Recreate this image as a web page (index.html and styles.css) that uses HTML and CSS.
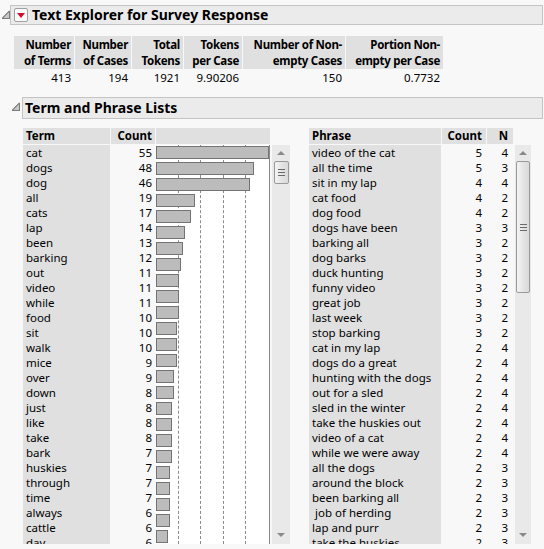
FILE: index.html
```html
<!DOCTYPE html>
<html>
<head>
<meta charset="utf-8">
<link rel="stylesheet" href="styles.css">
</head>
<body>
<div class="report">
  <div class="outline outline-top">
    <span class="disclosure"></span>
    <div class="outline-bar">
      <span class="menu-btn"><span class="menu-arrow"></span></span>
      <span class="outline-title">Text Explorer for Survey Response</span>
    </div>
  </div>

  <table class="summary">
    <thead>
      <tr>
        <th class="c1">Number<br>of Terms</th>
        <th class="c2">Number<br>of Cases</th>
        <th class="c3">Total<br>Tokens</th>
        <th class="c4">Tokens<br>per Case</th>
        <th class="c5">Number of Non-<br>empty Cases</th>
        <th class="c6">Portion Non-<br>empty per Case</th>
      </tr>
    </thead>
    <tbody>
      <tr>
        <td>413</td><td>194</td><td>1921</td><td>9.90206</td><td>150</td><td>0.7732</td>
      </tr>
    </tbody>
  </table>

  <div class="outline outline-sub">
    <span class="disclosure"></span>
    <div class="outline-bar">
      <span class="outline-title">Term and Phrase Lists</span>
    </div>
  </div>

  <div class="lists">
    <div class="list term-list">
      <div class="list-head">
        <div class="h-term">Term</div>
        <div class="h-count">Count</div>
        <div class="h-chart"></div>
      </div>
      <div class="list-body">
        <div class="col col-term">
          <div>cat</div><div>dogs</div><div>dog</div><div>all</div><div>cats</div><div>lap</div><div>been</div><div>barking</div><div>out</div><div>video</div><div>while</div><div>food</div><div>sit</div><div>walk</div><div>mice</div><div>over</div><div>down</div><div>just</div><div>like</div><div>take</div><div>bark</div><div>huskies</div><div>through</div><div>time</div><div>always</div><div>cattle</div><div>day</div>
        </div>
        <div class="col col-count">
          <div>55</div><div>48</div><div>46</div><div>19</div><div>17</div><div>14</div><div>13</div><div>12</div><div>11</div><div>11</div><div>11</div><div>10</div><div>10</div><div>10</div><div>9</div><div>9</div><div>8</div><div>8</div><div>8</div><div>8</div><div>7</div><div>7</div><div>7</div><div>7</div><div>6</div><div>6</div><div>6</div>
        </div>
        <div class="col col-chart">
          <span class="grid g1"></span><span class="grid g2"></span><span class="grid g3"></span><span class="grid g4"></span>
          <div class="bar-row"><span class="bar" style="width:113px"></span></div>
          <div class="bar-row"><span class="bar" style="width:98px"></span></div>
          <div class="bar-row"><span class="bar" style="width:94px"></span></div>
          <div class="bar-row"><span class="bar" style="width:39px"></span></div>
          <div class="bar-row"><span class="bar" style="width:35px"></span></div>
          <div class="bar-row"><span class="bar" style="width:29px"></span></div>
          <div class="bar-row"><span class="bar" style="width:27px"></span></div>
          <div class="bar-row"><span class="bar" style="width:25px"></span></div>
          <div class="bar-row"><span class="bar" style="width:23px"></span></div>
          <div class="bar-row"><span class="bar" style="width:23px"></span></div>
          <div class="bar-row"><span class="bar" style="width:23px"></span></div>
          <div class="bar-row"><span class="bar" style="width:21px"></span></div>
          <div class="bar-row"><span class="bar" style="width:21px"></span></div>
          <div class="bar-row"><span class="bar" style="width:21px"></span></div>
          <div class="bar-row"><span class="bar" style="width:18px"></span></div>
          <div class="bar-row"><span class="bar" style="width:18px"></span></div>
          <div class="bar-row"><span class="bar" style="width:16px"></span></div>
          <div class="bar-row"><span class="bar" style="width:16px"></span></div>
          <div class="bar-row"><span class="bar" style="width:16px"></span></div>
          <div class="bar-row"><span class="bar" style="width:16px"></span></div>
          <div class="bar-row"><span class="bar" style="width:14px"></span></div>
          <div class="bar-row"><span class="bar" style="width:14px"></span></div>
          <div class="bar-row"><span class="bar" style="width:14px"></span></div>
          <div class="bar-row"><span class="bar" style="width:14px"></span></div>
          <div class="bar-row"><span class="bar" style="width:12px"></span></div>
          <div class="bar-row"><span class="bar" style="width:12px"></span></div>
          <div class="bar-row"><span class="bar" style="width:12px"></span></div>
        </div>
        <div class="scrollbar">
          <span class="sb-up"></span>
          <div class="sb-track">
            <span class="sb-thumb thumb-short"><span class="grip"></span></span>
          </div>
          <span class="sb-down"></span>
        </div>
      </div>
    </div>

    <div class="list phrase-list">
      <div class="list-head">
        <div class="h-phrase">Phrase</div>
        <div class="h-pcount">Count</div>
        <div class="h-n">N</div>
      </div>
      <div class="list-body">
        <div class="col col-phrase">
          <div>video of the cat</div><div>all the time</div><div>sit in my lap</div><div>cat food</div><div>dog food</div><div>dogs have been</div><div>barking all</div><div>dog barks</div><div>duck hunting</div><div>funny video</div><div>great job</div><div>last week</div><div>stop barking</div><div>cat in my lap</div><div>dogs do a great</div><div>hunting with the dogs</div><div>out for a sled</div><div>sled in the winter</div><div>take the huskies out</div><div>video of a cat</div><div>while we were away</div><div>all the dogs</div><div>around the block</div><div>been barking all</div><div>&nbsp;job of herding</div><div>lap and purr</div><div>take the huskies</div>
        </div>
        <div class="col col-pcount">
          <div>5</div><div>5</div><div>4</div><div>4</div><div>4</div><div>3</div><div>3</div><div>3</div><div>3</div><div>3</div><div>3</div><div>3</div><div>3</div><div>2</div><div>2</div><div>2</div><div>2</div><div>2</div><div>2</div><div>2</div><div>2</div><div>2</div><div>2</div><div>2</div><div>2</div><div>2</div><div>2</div>
        </div>
        <div class="col col-n">
          <div>4</div><div>3</div><div>4</div><div>2</div><div>2</div><div>3</div><div>2</div><div>2</div><div>2</div><div>2</div><div>2</div><div>2</div><div>2</div><div>4</div><div>4</div><div>4</div><div>4</div><div>4</div><div>4</div><div>4</div><div>4</div><div>3</div><div>3</div><div>3</div><div>3</div><div>3</div><div>3</div>
        </div>
        <div class="scrollbar">
          <span class="sb-up"></span>
          <div class="sb-track">
            <span class="sb-thumb thumb-long"><span class="grip"></span></span>
          </div>
          <span class="sb-down"></span>
        </div>
      </div>
    </div>
  </div>
</div>
</body>
</html>
```
FILE: styles.css
```css
html, body {
  margin: 0;
  padding: 0;
  background: #f8f8f8;
}
body {
  font-family: "Noto Sans", "Open Sans", sans-serif;
  font-size: 11.5px;
  color: #000;
  width: 544px;
  height: 549px;
  overflow: hidden;
}
.report {
  padding-top: 5px;
}

/* outline headers */
.outline {
  display: flex;
  align-items: flex-start;
}
.outline-top {
  padding-left: 2px;
}
.outline-sub {
  padding-left: 12px;
  margin-top: 12px;
}
.disclosure {
  width: 8px;
  height: 8px;
  margin-top: 6px;
  flex: none;
  background: linear-gradient(to bottom right, transparent 50%, #c8c8c8 50%);
  border-right: 1px solid #7a7a7a;
  border-bottom: 1px solid #7a7a7a;
  position: relative;
  box-sizing: border-box;
}
.disclosure::after {
  content: "";
  position: absolute;
  left: -1px;
  top: 3px;
  width: 10px;
  height: 1px;
  background: #7a7a7a;
  transform: rotate(-45deg);
  transform-origin: center;
}
.outline-bar {
  flex: 1;
  display: flex;
  align-items: center;
  height: 18px;
  margin-right: 1px;
  background: #ebebeb;
  border: 1px solid #c4c4c4;
}
.outline-sub .outline-bar { height: 20px; margin-left: 2px; }
.menu-btn {
  width: 12px;
  height: 12px;
  margin-left: 3px;
  border: 1px solid #a0a0a0;
  border-radius: 2px;
  background: #fafafa;
  display: flex;
  align-items: center;
  justify-content: center;
  flex: none;
}
.menu-arrow {
  width: 0;
  height: 0;
  border-left: 4px solid transparent;
  border-right: 4px solid transparent;
  border-top: 5px solid #d0102a;
}
.outline-title {
  font-weight: bold;
  font-size: 14px;
  margin-left: 4px;
  line-height: 18px;
}
.outline-sub .outline-title { margin-left: 2px; }

/* summary table */
.summary {
  margin-top: 11px;
  border-collapse: separate;
  border-spacing: 1px 0;
  margin-left: 13px;
  table-layout: fixed;
  width: 431px;
}
.summary th, .summary td {
  box-sizing: border-box;
  overflow: visible;
}
.summary th {
  background: #e0e0e0;
  font-weight: bold;
  text-align: right;
  line-height: 16px;
  padding: 1px 3px 0 0;
  height: 33px;
  white-space: nowrap;
  letter-spacing: -0.3px;
}
.summary td {
  text-align: right;
  padding: 1px 3px 0 0;
  line-height: 15px;
  height: 16px;
}
.summary .c1 { width: 60px; }
.summary .c2 { width: 56px; }
.summary .c3 { width: 51px; }
.summary .c4 { width: 58px; }
.summary .c5 { width: 102px; }
.summary .c6 { width: 97px; }

/* lists */
.lists {
  display: flex;
  margin-top: 9px;
  padding-left: 23px;
  gap: 19px;
}
.list-head {
  display: flex;
  gap: 1px;
  height: 16px;
  line-height: 16px;
  font-weight: bold;
  margin-bottom: 1px;
}
.list-head > div {
  background: #e0e0e0;
  box-sizing: border-box;
}
.h-term { width: 87px; padding-left: 3px; }
.h-count { width: 44px; text-align: right; padding-right: 3px; }
.h-chart { width: 114px; }
.h-phrase { width: 132px; padding-left: 3px; }
.h-pcount { width: 44px; text-align: right; padding-right: 4px; }
.h-n { width: 26px; text-align: right; padding-right: 5px; }

.list-body {
  display: flex;
  gap: 1px;
  height: 399px;
  overflow: hidden;
}
.col > div {
  height: 15px;
  line-height: 15px;
  white-space: nowrap;
  box-sizing: border-box;
}
.col-term { width: 87px; background: #e0e0e0; padding-left: 3px; box-sizing: border-box; }
.col-count { width: 44px; text-align: right; padding-right: 3px; box-sizing: border-box; }
.col-phrase { width: 132px; background: #e0e0e0; padding-left: 3px; box-sizing: border-box; }
.col-pcount { width: 44px; text-align: right; padding-right: 4px; box-sizing: border-box; }
.col-n { width: 26px; text-align: right; padding-right: 5px; box-sizing: border-box; }

.col-chart {
  width: 114px;
  margin-right: 1px;
  background: #fff;
  border-right: 1px solid #8a8a8a;
  box-sizing: border-box;
  position: relative;
}
.col-chart .bar-row {
  position: relative;
}
.grid {
  position: absolute;
  top: 0;
  bottom: 0;
  width: 0;
  border-left: 1px dashed #8c8c8c;
}
.g1 { left: 22px; }
.g2 { left: 44px; }
.g3 { left: 67px; }
.g4 { left: 89px; }
.bar {
  position: relative;
  display: block;
  height: 13px;
  margin-top: 1px;
  background: #bcbcbc;
  border: 1px solid #747474;
  box-sizing: border-box;
}

/* scrollbars */
.scrollbar {
  width: 18px;
  background: #e9e9e9;
  display: flex;
  flex-direction: column;
  align-items: center;
  flex: none;
}
.phrase-list .scrollbar { margin-left: 1px; width: 16px; }
.sb-up, .sb-down {
  width: 0;
  height: 0;
  border-left: 4px solid transparent;
  border-right: 4px solid transparent;
  flex: none;
}
.sb-up {
  border-bottom: 4px solid #8a8a8a;
  margin-top: 6px;
}
.sb-down {
  border-top: 4px solid #8a8a8a;
  margin-bottom: 7px;
}
.sb-track {
  flex: 1;
  width: 100%;
  display: flex;
  flex-direction: column;
  align-items: center;
  padding-top: 6px;
}
.sb-thumb {
  width: 15px;
  box-sizing: border-box;
  border: 1px solid #999;
  border-radius: 2px;
  background: linear-gradient(to right, #f4f4f4, #e2e2e2 60%, #dadada);
  display: flex;
  align-items: center;
  justify-content: center;
}
.phrase-list .sb-thumb { width: 14px; }
.thumb-short { height: 23px; }
.thumb-long { height: 132px; }
.grip {
  width: 7px;
  height: 7px;
  background: repeating-linear-gradient(to bottom, #6a6a6a 0, #6a6a6a 1px, transparent 1px, transparent 3px);
}
```
